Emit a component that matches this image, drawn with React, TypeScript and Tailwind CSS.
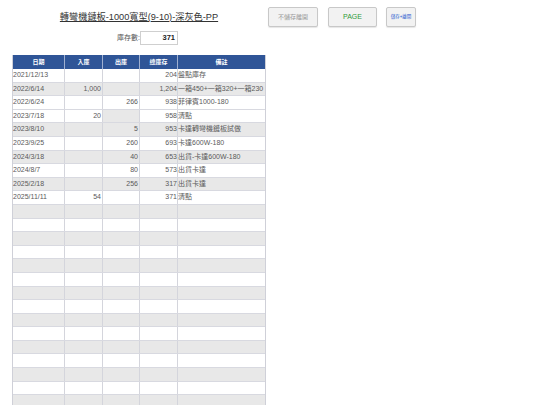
import React from 'react';

const font = { fontFamily: '"Liberation Sans", "Noto Sans CJK TC", sans-serif' };

type Row = {
  date: string;
  inQty: string;
  outQty: string;
  total: string;
  note: string;
  outGray?: boolean;
};

const rows: Row[] = [
  { date: '2021/12/13', inQty: '', outQty: '', total: '204', note: '盤點庫存' },
  { date: '2022/6/14', inQty: '1,000', outQty: '', total: '1,204', note: '一箱450+一箱320+一箱230' },
  { date: '2022/6/24', inQty: '', outQty: '266', total: '938', note: '菲律賓1000-180' },
  { date: '2023/7/18', inQty: '20', outQty: '', total: '958', note: '清點', outGray: true },
  { date: '2023/8/10', inQty: '', outQty: '5', total: '953', note: '卡達轉彎機鏈板試做' },
  { date: '2023/9/25', inQty: '', outQty: '260', total: '693', note: '卡達600W-180' },
  { date: '2024/3/18', inQty: '', outQty: '40', total: '653', note: '出貨-卡達600W-180' },
  { date: '2024/8/7', inQty: '', outQty: '80', total: '573', note: '出貨卡達' },
  { date: '2025/2/18', inQty: '', outQty: '256', total: '317', note: '出貨卡達' },
  { date: '2025/11/11', inQty: '54', outQty: '', total: '371', note: '清點' },
];

const TOTAL_ROWS = 25;

function rowBg(i: number) {
  // stripes are not perfectly regular at the top of the sheet
  const grayIdx = [1, 4, 6, 8];
  if (i < 10) return grayIdx.includes(i) ? 'bg-[#e8e8e8]' : 'bg-white';
  return i % 2 === 0 ? 'bg-[#e8e8e8]' : 'bg-white';
}

function App() {
  const all: (Row | null)[] = [];
  for (let i = 0; i < TOTAL_ROWS; i++) all.push(rows[i] || null);

  return (
    <div className="w-[540px] h-[405px] overflow-hidden bg-white text-[#444]" style={font}>
      <div className="flex pl-[12px] pt-[7px]">
        <div className="w-[254px] flex justify-center pt-[4px]">
          <span className="text-[9.2px] underline text-[#333]">
            轉彎機鏈板-1000寬型(9-10)-深灰色-PP
          </span>
        </div>
        <button className="ml-[2px] w-[50px] h-[20px] bg-[#f2f2f2] border border-[#c8c8c8] rounded-[2px] text-[6px] text-[#9a9a9a] shadow-[0_1px_1px_rgba(0,0,0,0.1)]">
          不儲存離開
        </button>
        <button className="ml-[10px] w-[49px] h-[20px] bg-[#f2f2f2] border border-[#c8c8c8] rounded-[2px] text-[7px] text-[#2e9b3a] shadow-[0_1px_1px_rgba(0,0,0,0.1)]">
          PAGE
        </button>
        <button className="ml-[9px] w-[30px] h-[20px] bg-[#f2f2f2] border border-[#c8c8c8] rounded-[2px] text-[4.5px] text-[#2a5bd0] shadow-[0_1px_1px_rgba(0,0,0,0.1)]">
          儲存+離開
        </button>
      </div>

      <div className="flex items-center pl-[117px] mt-[4px]">
        <span className="text-[7px] text-[#555] w-[23px]">庫存數:</span>
        <div className="w-[38px] h-[14px] border border-[#cfcfcf] flex items-center justify-end pr-[2px] text-[7.5px] font-bold text-[#222]">
          371
        </div>
      </div>

      <div className="ml-[12px] mt-[10px] w-[254px] border-l border-r border-[#cfd0d8]">
        <div className="flex h-[14px] bg-[#2f5597] text-white text-[6px] font-bold items-stretch">
          <div className="w-[52px] flex items-center justify-center border-r border-[#9fb0d0]">日期</div>
          <div className="w-[38px] flex items-center justify-center border-r border-[#9fb0d0]">入庫</div>
          <div className="w-[37px] flex items-center justify-center border-r border-[#9fb0d0]">出庫</div>
          <div className="w-[38px] flex items-center justify-center border-r border-[#9fb0d0]">總庫存</div>
          <div className="flex-1 flex items-center justify-center">備註</div>
        </div>
        {all.map((r, i) => (
          <div
            key={i}
            className={`flex h-[13.6px] text-[7px] text-[#5a5a5a] border-b border-[#d8d9e0] ${rowBg(i)}`}
          >
            <div className="w-[52px] flex items-center border-r border-[#d4d5dc]">{r?.date}</div>
            <div className="w-[38px] flex items-center justify-end border-r border-[#d4d5dc] pr-[1px]">{r?.inQty}</div>
            <div
              className={`w-[37px] flex items-center justify-end border-r border-[#d4d5dc] pr-[1px] ${
                r?.outGray ? 'bg-[#e8e8e8]' : ''
              }`}
            >
              {r?.outQty}
            </div>
            <div className="w-[38px] flex items-center justify-end border-r border-[#d4d5dc]">{r?.total}</div>
            <div className="flex-1 flex items-center whitespace-nowrap overflow-hidden">{r?.note}</div>
          </div>
        ))}
      </div>
    </div>
  );
}

export default App;
